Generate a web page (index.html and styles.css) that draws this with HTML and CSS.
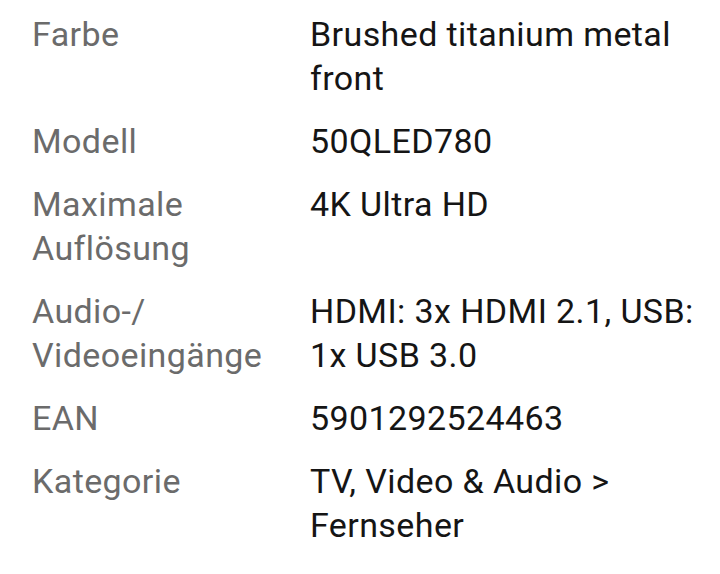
FILE: index.html
```html
<!DOCTYPE html>
<html lang="de">
<head>
<meta charset="utf-8">
<link rel="stylesheet" href="styles.css">
</head>
<body>
<dl class="specs">
  <div class="row"><dt class="label">Farbe</dt><dd class="value">Brushed titanium metal front</dd></div>
  <div class="row"><dt class="label">Modell</dt><dd class="value">50QLED780</dd></div>
  <div class="row"><dt class="label">Maximale Auflösung</dt><dd class="value">4K Ultra HD</dd></div>
  <div class="row"><dt class="label">Audio-/ Videoeingänge</dt><dd class="value">HDMI: 3x HDMI 2.1, USB: 1x USB 3.0</dd></div>
  <div class="row"><dt class="label">EAN</dt><dd class="value">5901292524463</dd></div>
  <div class="row"><dt class="label">Kategorie</dt><dd class="value">TV, Video &amp; Audio &gt; Fernseher</dd></div>
</dl>
</body>
</html>
```
FILE: styles.css
```css
html, body {
  margin: 0;
  padding: 0;
  background: #ffffff;
}
body {
  font-family: Roboto, "Liberation Sans", sans-serif;
  font-size: 34px;
  line-height: 44px;
  letter-spacing: 0.4px;
}
.specs {
  margin: 0;
  padding: 12px 20px 0 32px;
  display: flex;
  flex-direction: column;
  gap: 19px;
}
.row {
  display: grid;
  grid-template-columns: 278px 1fr;
}
.label {
  margin: 0;
  color: #6b6b6b;
  padding-right: 12px;
}
.value {
  margin: 0;
  color: #151515;
}
```
